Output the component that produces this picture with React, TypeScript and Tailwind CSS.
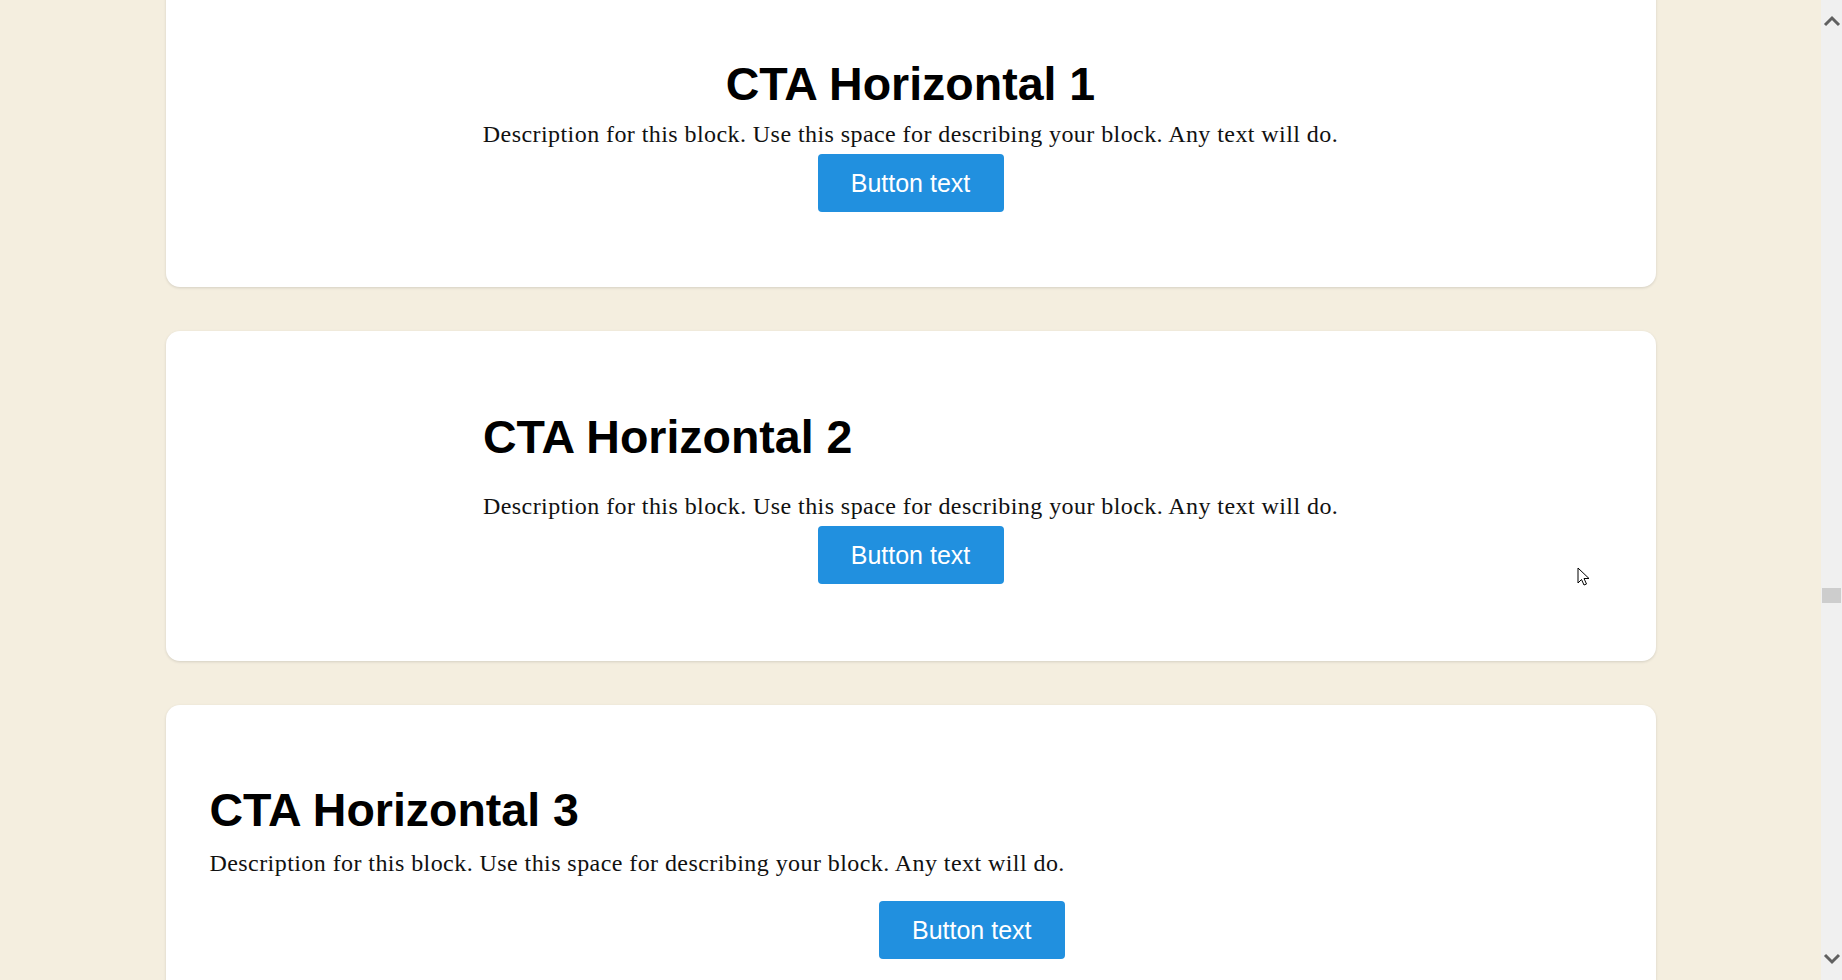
import React from 'react';

const sans = "font-['Liberation_Sans',Arial,sans-serif]";
const serif = "font-['Liberation_Serif','Times_New_Roman',serif]";

const description = 'Description for this block. Use this space for describing your block. Any text will do.';

const CtaButton = ({ className = '' }: { className?: string }) => (
    <button
        className={`${sans} w-[186px] h-[58px] rounded-[4px] bg-[#2190df] text-white text-[25px] leading-none flex items-center justify-center ${className}`}
    >
        Button text
    </button>
);

const Heading = ({ children }: { children: React.ReactNode }) => (
    <h2 className={`${sans} text-[46.5px] leading-[46px] font-bold text-black`}>{children}</h2>
);

const Description = ({ className = '' }: { className?: string }) => (
    <p className={`${serif} text-[24px] leading-[28px] tracking-[0.43px] text-[#111] whitespace-nowrap ${className}`}>
        {description}
    </p>
);

const Card = ({ children, className = '' }: { children: React.ReactNode; className?: string }) => (
    <section
        className={`w-[1490px] h-[330px] mx-auto shrink-0 bg-white rounded-[14px] shadow-[0_1px_3px_rgba(0,0,0,0.13)] ${className}`}
    >
        {children}
    </section>
);

const Chevron = ({ up }: { up?: boolean }) => (
    <svg width="18" height="14" viewBox="0 0 18 14" className="block shrink-0">
        <path
            d={up ? 'M2 11 L9 4 L16 11' : 'M2 3 L9 10 L16 3'}
            fill="none"
            stroke="#606060"
            strokeWidth="3"
        />
    </svg>
);

export default function App() {
    return (
        <div className="relative w-full h-[980px] flex bg-[#f4eedf] overflow-hidden">
            <main className="flex-1 flex flex-col gap-[44px] overflow-hidden">
                {/* CTA 1: everything centred */}
                <Card className="-mt-[43px] pt-[104px] flex flex-col items-center">
                    <Heading>CTA Horizontal 1</Heading>
                    <Description className="mt-[13px]" />
                    <CtaButton className="mt-[6px]" />
                </Card>

                {/* CTA 2: left title, centred button */}
                <Card className="pt-[83px]">
                    <div className="w-[855px] mx-auto flex flex-col">
                        <Heading>CTA Horizontal 2</Heading>
                        <Description className="mt-[32px]" />
                        <CtaButton className="mt-[6px] self-center" />
                    </div>
                </Card>

                {/* CTA 3: left aligned, button at the end */}
                <Card className="pt-[82px] pl-[44px]">
                    <div className="w-fit flex flex-col">
                        <Heading>CTA Horizontal 3</Heading>
                        <Description className="mt-[16px]" />
                        <CtaButton className="mt-[24px] self-end" />
                    </div>
                </Card>
            </main>

            <aside className="w-[21px] h-full bg-[#f0f0f0] flex flex-col items-center pt-[14px] pb-[14px]">
                <Chevron up />
                <div className="w-[19px] h-[15px] bg-[#cdcdcd] mt-[560px] shrink-0" />
                <div className="mt-auto">
                    <Chevron />
                </div>
            </aside>

            <svg
                width="14"
                height="20"
                viewBox="0 0 14 20"
                className="absolute left-[1577px] top-[567px]"
            >
                <path d="M1 1 L1 16 L4.5 12.5 L7 18 L9.5 17 L7 11.5 L12 11.5 Z" fill="#fff" stroke="#000" strokeWidth="1" strokeLinejoin="round" />
            </svg>
        </div>
    );
}
